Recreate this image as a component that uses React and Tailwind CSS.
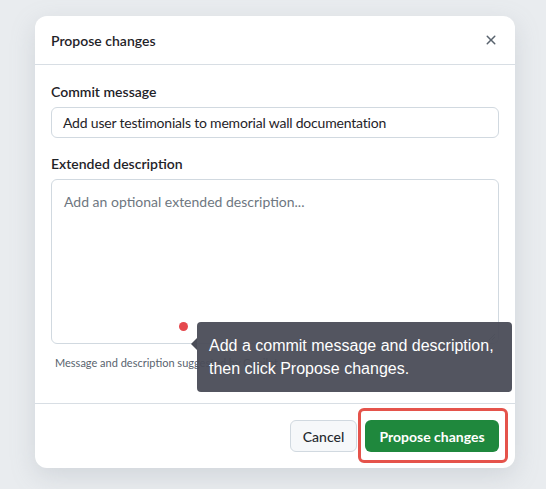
import React from "react";

const XIcon = () => (
  <svg width="16" height="16" viewBox="0 0 16 16" fill="currentColor">
    <path d="M3.72 3.72a.75.75 0 0 1 1.06 0L8 6.94l3.22-3.22a.749.749 0 0 1 1.275.326.749.749 0 0 1-.215.734L9.06 8l3.22 3.22a.749.749 0 0 1-.326 1.275.749.749 0 0 1-.734-.215L8 9.06l-3.22 3.22a.751.751 0 0 1-1.042-.018.751.751 0 0 1-.018-1.042L6.94 8 3.72 4.78a.75.75 0 0 1 0-1.06Z" />
  </svg>
);

export default function App() {
  return (
    <div
      className="w-[546px] h-[489px] bg-[#e9ecef] pt-4 pl-[35px]"
      style={{ fontFamily: 'Lato, "Noto Sans", sans-serif' }}
    >
      <div className="w-[480px] h-[452px] bg-white rounded-xl shadow-[0_8px_24px_rgba(140,149,159,0.25)] flex flex-col">
        {/* Header */}
        <div className="h-[49px] flex items-center justify-between pl-4 pr-4 border-b border-[#d8dee4]">
          <h2 className="text-[14px] font-semibold text-[#1f2328]">Propose changes</h2>
          <button className="text-[#59636e]">
            <XIcon />
          </button>
        </div>

        {/* Body */}
        <div className="relative px-4 pt-[17px] flex-1">
          <label className="block text-[14px] font-semibold text-[#1f2328] leading-5">
            Commit message
          </label>
          <div className="mt-[5px] h-[31px] border border-[#d1d9e0] rounded-md px-[11px] flex items-center text-[14px] tracking-[-0.2px] text-[#1f2328]">
            Add user testimonials to memorial wall documentation
          </div>

          <label className="block mt-[16px] text-[14px] font-semibold text-[#1f2328] leading-5">
            Extended description
          </label>
          <div className="mt-[5px] h-[165px] border border-[#d1d9e0] rounded-md px-3 pt-[11px] text-[14px] text-[#6e7781] relative">
            Add an optional extended description...
            <svg className="absolute right-[2px] bottom-[2px]" width="8" height="8" viewBox="0 0 8 8">
              <path d="M7 1L1 7M7 4L4 7" stroke="#a0a7b0" strokeWidth="1" />
            </svg>
          </div>
          <p className="mt-[11px] pl-1 text-[11px] text-[#59636e]">
            Message and description suggested by Copilot
          </p>

          {/* Tooltip */}
          <div className="absolute left-[144px] top-[257px] w-[9px] h-[9px] rounded-full bg-[#e5484d]" />
          <div
            className="absolute left-[162px] top-[257px] w-[315px] h-[70px] bg-[#4a4c57]/95 rounded-[4px] px-3 pt-[12px] text-white text-[16px] leading-[23px]"
            style={{ fontFamily: '"Liberation Sans", Arial, sans-serif' }}
          >
            <div className="absolute -left-[6px] top-[16px] w-0 h-0 border-y-[6px] border-y-transparent border-r-[6px] border-r-[#4a4c57]" />
            Add a commit message and description,
            <br />
            then click Propose changes.
          </div>
        </div>

        {/* Footer */}
        <div className="h-[65px] border-t border-[#d8dee4] flex items-center justify-end gap-2 pr-4">
          <button className="h-8 w-[67px] rounded-md border border-[#d1d9e0] bg-[#f6f8fa] text-[14px] font-medium text-[#25292e]">
            Cancel
          </button>
          <div className="relative">
            <div className="absolute -left-[7px] -right-[9px] -top-3 -bottom-[11px] border-[3px] border-[#e5534b] rounded-md" />
            <button className="relative h-8 w-[134px] rounded-md bg-[#1f883d] text-[14px] font-bold text-white">
              Propose changes
            </button>
          </div>
        </div>
      </div>
    </div>
  );
}
